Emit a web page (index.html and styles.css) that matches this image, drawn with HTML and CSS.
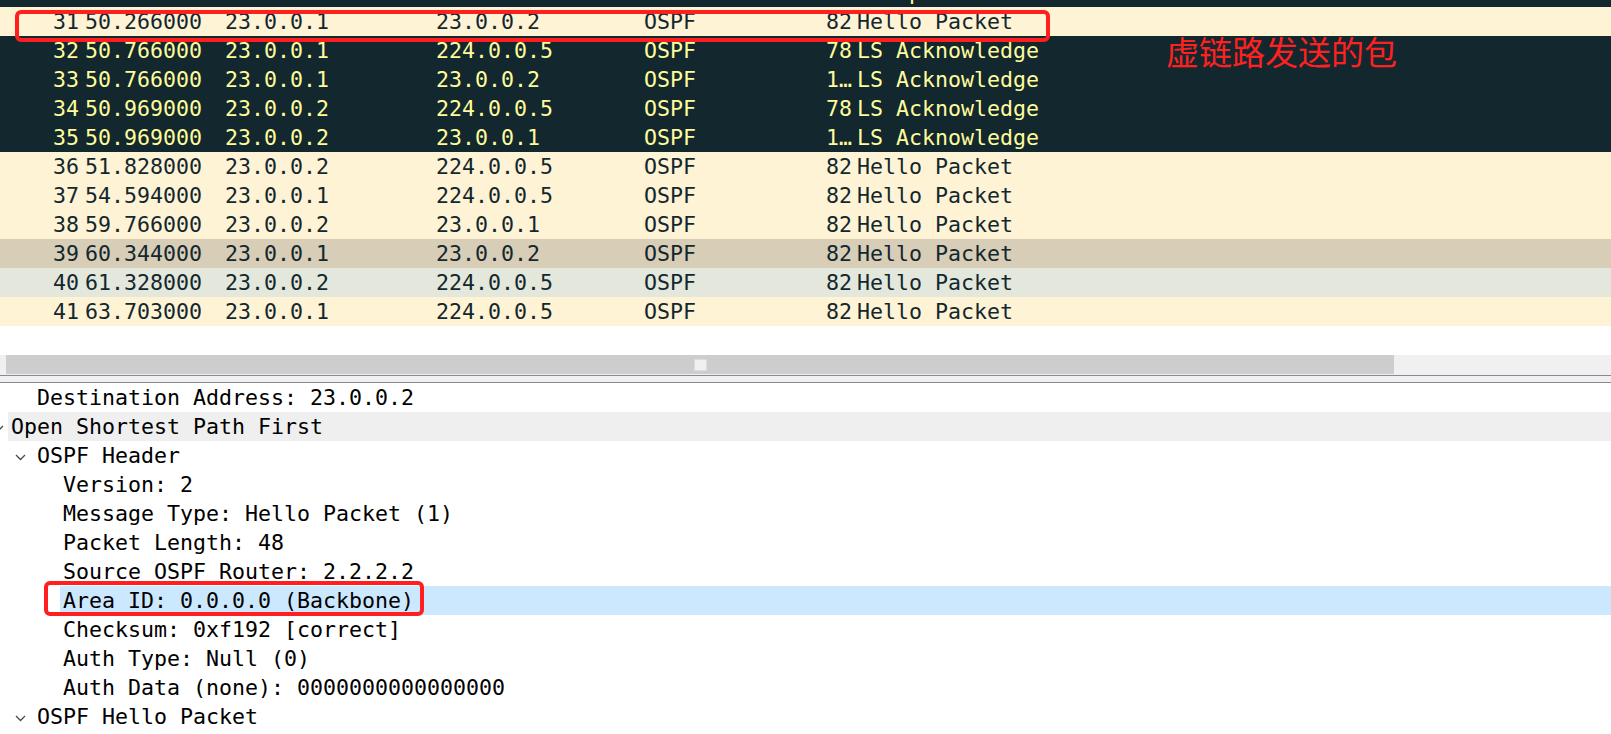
FILE: index.html
```html
<!DOCTYPE html>
<html lang="zh-CN">
<head>
<meta charset="utf-8">
<title>Wireshark - OSPF</title>
<link rel="stylesheet" href="styles.css">
</head>
<body>
<div class="app">
  <div class="plist">
    <div class="prow state cut"><span class="c-no"></span><span class="c-time"></span><span class="c-src"></span><span class="c-dst"></span><span class="c-proto"></span><span class="c-len"></span><span class="c-info">LS Update</span></div>
    <div class="prow routing"><span class="c-no">31</span><span class="c-time">50.266000</span><span class="c-src">23.0.0.1</span><span class="c-dst">23.0.0.2</span><span class="c-proto">OSPF</span><span class="c-len">82</span><span class="c-info">Hello Packet</span></div>
    <div class="prow state"><span class="c-no">32</span><span class="c-time">50.766000</span><span class="c-src">23.0.0.1</span><span class="c-dst">224.0.0.5</span><span class="c-proto">OSPF</span><span class="c-len">78</span><span class="c-info">LS Acknowledge</span></div>
    <div class="prow state"><span class="c-no">33</span><span class="c-time">50.766000</span><span class="c-src">23.0.0.1</span><span class="c-dst">23.0.0.2</span><span class="c-proto">OSPF</span><span class="c-len">1…</span><span class="c-info">LS Acknowledge</span></div>
    <div class="prow state"><span class="c-no">34</span><span class="c-time">50.969000</span><span class="c-src">23.0.0.2</span><span class="c-dst">224.0.0.5</span><span class="c-proto">OSPF</span><span class="c-len">78</span><span class="c-info">LS Acknowledge</span></div>
    <div class="prow state"><span class="c-no">35</span><span class="c-time">50.969000</span><span class="c-src">23.0.0.2</span><span class="c-dst">23.0.0.1</span><span class="c-proto">OSPF</span><span class="c-len">1…</span><span class="c-info">LS Acknowledge</span></div>
    <div class="prow routing"><span class="c-no">36</span><span class="c-time">51.828000</span><span class="c-src">23.0.0.2</span><span class="c-dst">224.0.0.5</span><span class="c-proto">OSPF</span><span class="c-len">82</span><span class="c-info">Hello Packet</span></div>
    <div class="prow routing"><span class="c-no">37</span><span class="c-time">54.594000</span><span class="c-src">23.0.0.1</span><span class="c-dst">224.0.0.5</span><span class="c-proto">OSPF</span><span class="c-len">82</span><span class="c-info">Hello Packet</span></div>
    <div class="prow routing"><span class="c-no">38</span><span class="c-time">59.766000</span><span class="c-src">23.0.0.2</span><span class="c-dst">23.0.0.1</span><span class="c-proto">OSPF</span><span class="c-len">82</span><span class="c-info">Hello Packet</span></div>
    <div class="prow selected"><span class="c-no">39</span><span class="c-time">60.344000</span><span class="c-src">23.0.0.1</span><span class="c-dst">23.0.0.2</span><span class="c-proto">OSPF</span><span class="c-len">82</span><span class="c-info">Hello Packet</span></div>
    <div class="prow hovered"><span class="c-no">40</span><span class="c-time">61.328000</span><span class="c-src">23.0.0.2</span><span class="c-dst">224.0.0.5</span><span class="c-proto">OSPF</span><span class="c-len">82</span><span class="c-info">Hello Packet</span></div>
    <div class="prow routing"><span class="c-no">41</span><span class="c-time">63.703000</span><span class="c-src">23.0.0.1</span><span class="c-dst">224.0.0.5</span><span class="c-proto">OSPF</span><span class="c-len">82</span><span class="c-info">Hello Packet</span></div>
  </div>

  <div class="hscroll">
    <div class="track track-l"></div>
    <div class="thumb"><span class="grip"></span></div>
    <div class="track track-r"></div>
  </div>

  <div class="splitter"></div>

  <div class="tree">
    <div class="trow l1">Destination Address: 23.0.0.2</div>
    <div class="trow l0 hover"><svg class="chev" viewBox="0 0 11 7"><polyline points="1,1 5.5,5.5 10,1"/></svg>Open Shortest Path First</div>
    <div class="trow l1"><svg class="chev" viewBox="0 0 11 7"><polyline points="1,1 5.5,5.5 10,1"/></svg>OSPF Header</div>
    <div class="trow l2">Version: 2</div>
    <div class="trow l2">Message Type: Hello Packet (1)</div>
    <div class="trow l2">Packet Length: 48</div>
    <div class="trow l2">Source OSPF Router: 2.2.2.2</div>
    <div class="trow l2 sel">Area ID: 0.0.0.0 (Backbone)</div>
    <div class="trow l2">Checksum: 0xf192 [correct]</div>
    <div class="trow l2">Auth Type: Null (0)</div>
    <div class="trow l2">Auth Data (none): 0000000000000000</div>
    <div class="trow l1"><svg class="chev" viewBox="0 0 11 7"><polyline points="1,1 5.5,5.5 10,1"/></svg>OSPF Hello Packet</div>
  </div>

  <div class="mark mark-row"></div>
  <div class="mark mark-area"></div>
  <div class="note">虚链路发送的包</div>
</div>
</body>
</html>
```

FILE: styles.css
```css
html, body {
  margin: 0;
  padding: 0;
  background: #ffffff;
}

.app {
  position: relative;
  width: 1611px;
  height: 734px;
  overflow: hidden;
  font-family: "DejaVu Sans Mono", "Liberation Mono", monospace;
  font-size: 21.6px;
  color: #12272e;
}

/* ---------- packet list ---------- */
.plist {
  height: 355px;
  overflow: hidden;
  background: #ffffff;
}

.prow {
  display: flex;
  height: 29px;
  line-height: 29px;
  white-space: pre;
}

.prow.cut {
  margin-top: -22px;
}

.prow.routing {
  background: #fff3d6;
  color: #12272e;
}

.prow.state {
  background: #12272e;
  color: #fffc9c;
}

.prow.selected {
  background: #d8cdb6;
  color: #12272e;
}

.prow.hovered {
  background: #e4e7dc;
  color: #12272e;
}

.c-no {
  width: 79px;
  text-align: right;
  flex: none;
}

.c-time {
  margin-left: 6px;
  width: 140px;
  flex: none;
}

.c-src {
  width: 211px;
  flex: none;
}

.c-dst {
  width: 208px;
  flex: none;
}

.c-proto {
  width: 156px;
  flex: none;
}

.c-len {
  width: 52px;
  text-align: right;
  flex: none;
}

.c-info {
  margin-left: 5px;
  flex: none;
}

/* ---------- horizontal scrollbar ---------- */
.hscroll {
  display: flex;
  height: 20px;
  background: #f0f0f0;
}

.track-l {
  width: 6px;
  flex: none;
}

.thumb {
  width: 1388px;
  flex: none;
  height: 19px;
  background: #cdcdcd;
  display: flex;
  align-items: center;
  justify-content: center;
}

.grip {
  width: 11px;
  height: 10px;
  background: #f0f0f0;
  border: 1px solid #dcdcdc;
  box-sizing: content-box;
  margin-top: 1px;
}

.track-r {
  flex: 1;
}

/* ---------- splitter ---------- */
.splitter {
  height: 6px;
  background: #f0f0f0;
  border-top: 1px solid #8a8897;
  border-bottom: 1px solid #8a8897;
}

/* ---------- detail tree ---------- */
.tree {
  background: #ffffff;
  color: #000000;
}

.trow {
  position: relative;
  height: 29px;
  line-height: 29px;
  white-space: pre;
  padding-left: 3px;
}

.trow.l0 { margin-left: 8px; }
.trow.l1 { margin-left: 34px; }
.trow.l2 { margin-left: 60px; }

.trow.hover {
  background: #efefef;
}

.trow.sel {
  background: #cce8ff;
}

.chev {
  position: absolute;
  left: -19px;
  top: 13px;
  width: 11px;
  height: 7px;
}

.chev polyline {
  fill: none;
  stroke: #4a4a4a;
  stroke-width: 1.3;
}

.trow.l0 .chev {
  left: -15px;
}

/* ---------- annotations ---------- */
.mark {
  position: absolute;
  box-sizing: border-box;
  border: 4px solid #ff1f1f;
  border-radius: 6px;
}

.mark-row {
  left: 15px;
  top: 10px;
  width: 1035px;
  height: 32px;
}

.mark-area {
  left: 44px;
  top: 581px;
  width: 380px;
  height: 35px;
}

.note {
  position: absolute;
  left: 1166px;
  top: 35px;
  font-family: "Noto Sans CJK SC", "Noto Sans", sans-serif;
  font-size: 33px;
  line-height: 1;
  color: #ff2020;
  white-space: nowrap;
}
```
